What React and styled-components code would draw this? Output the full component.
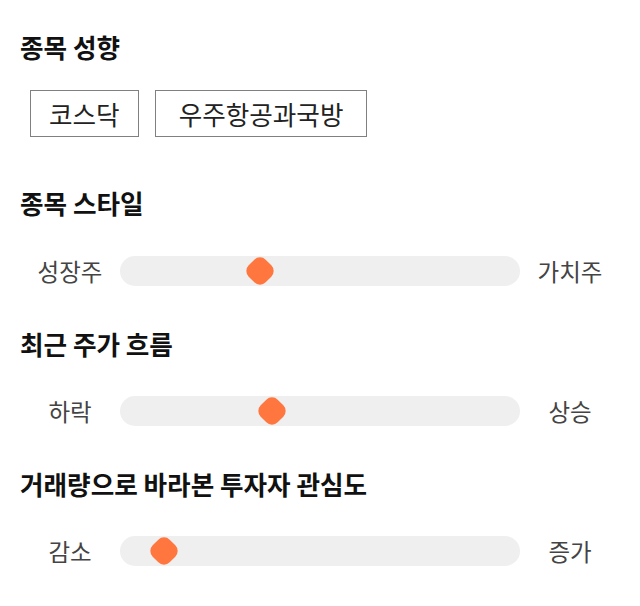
import React from "react";
import styled, { createGlobalStyle } from "styled-components";

const GlobalStyle = createGlobalStyle`
  body {
    margin: 0;
    background: #ffffff;
    font-family: "Noto Sans CJK KR", "Noto Sans", sans-serif;
  }
`;

const Page = styled.div`
  padding: 33px 20px 0 20px;
  display: flex;
  flex-direction: column;
`;

const Section = styled.section`
  display: flex;
  flex-direction: column;
  gap: ${(p) => p.gap}px;
  margin-top: ${(p) => p.top || 0}px;
`;

const Title = styled.h2`
  margin: 0;
  font-size: 25.6px;
  line-height: 28px;
  font-weight: 700;
  color: #111111;
`;

const Chips = styled.div`
  display: flex;
  gap: 16px;
  padding-left: 10px;
`;

const Chip = styled.button`
  height: 47px;
  padding: 0 ${(p) => p.pad}px;
  border: 1px solid #808080;
  background: #ffffff;
  font-family: inherit;
  font-size: 25.6px;
  color: #222222;
`;

const SliderRow = styled.div`
  display: flex;
  align-items: center;
  height: 30px;
`;

const EndLabel = styled.span`
  width: 100px;
  text-align: center;
  font-size: 23.5px;
  color: #444444;
`;

const Track = styled.div`
  position: relative;
  flex: 1;
  height: 30px;
  border-radius: 15px;
  background: #efefef;
`;

const Thumb = styled.div`
  position: absolute;
  top: 50%;
  width: 24px;
  height: 24px;
  border-radius: 8px;
  background: #ff773f;
  transform: translate(-50%, -50%) rotate(45deg);
`;

function Slider({ left, right, value }) {
  return (
    <SliderRow>
      <EndLabel>{left}</EndLabel>
      <Track>
        <Thumb style={{ left: `${value}%` }} />
      </Track>
      <EndLabel>{right}</EndLabel>
    </SliderRow>
  );
}

export default function App() {
  return (
    <>
      <GlobalStyle />
      <Page>
        <Section gap={29}>
          <Title>종목 성향</Title>
          <Chips>
            <Chip pad={18}>코스닥</Chip>
            <Chip pad={23}>우주항공과국방</Chip>
          </Chips>
        </Section>
        <Section gap={39} top={52}>
          <Title>종목 스타일</Title>
          <Slider left="성장주" right="가치주" value={35} />
        </Section>
        <Section gap={38} top={44}>
          <Title>최근 주가 흐름</Title>
          <Slider left="하락" right="상승" value={38} />
        </Section>
        <Section gap={38} top={44}>
          <Title>거래량으로 바라본 투자자 관심도</Title>
          <Slider left="감소" right="증가" value={11} />
        </Section>
      </Page>
    </>
  );
}
